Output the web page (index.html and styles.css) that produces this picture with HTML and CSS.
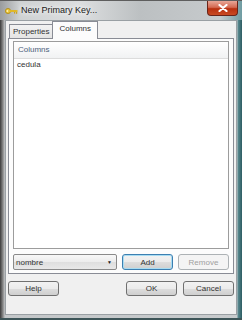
FILE: index.html
```html
<!DOCTYPE html>
<html lang="en">
<head>
    <meta charset="UTF-8">
    <title>New Primary Key...</title>
    <link rel="stylesheet" href="styles.css">
</head>
<body>
    <div class="window">
        <div class="titlebar">
            <svg class="key" width="13" height="8" viewBox="0 0 13 8">
                <circle cx="3" cy="4" r="2.6" fill="#e8c23a" stroke="#b08a10" stroke-width="0.8"/>
                <circle cx="2.4" cy="4" r="0.9" fill="#fff3b0"/>
                <rect x="5" y="3" width="7.5" height="2" fill="#e0b828"/>
                <rect x="9" y="5" width="1.2" height="1.6" fill="#c9a020"/>
                <rect x="11" y="5" width="1.2" height="1.8" fill="#c9a020"/>
            </svg>
            <span class="title">New Primary Key...</span>
            <div class="close">
                <svg width="10" height="8" viewBox="0 0 10 8">
                    <path d="M1.5 1 L8.5 7 M8.5 1 L1.5 7" stroke="#fff" stroke-width="2.2" stroke-linecap="round"/>
                </svg>
            </div>
        </div>

        <div class="client">
            <div class="tabs">
                <div class="tab">Properties</div>
                <div class="tab active">Columns</div>
            </div>
            <div class="panel">
                <div class="list">
                    <div class="list-head">Columns</div>
                    <div class="list-row">cedula</div>
                </div>
                <div class="controls">
                    <div class="combo">
                        <span>nombre</span>
                        <span class="arrow">&#9660;</span>
                    </div>
                    <button class="btn focus">Add</button>
                    <button class="btn disabled">Remove</button>
                </div>
            </div>
            <div class="footer">
                <button class="btn">Help</button>
                <div class="spacer"></div>
                <button class="btn">OK</button>
                <button class="btn">Cancel</button>
            </div>
        </div>
        <div class="grip"></div>
    </div>
</body>
</html>
```

FILE: styles.css
```css
body {
    margin: 0;
    font-family: "Liberation Sans", Arial, sans-serif;
    font-size: 8px;
    color: #222;
}
.window {
    width: 242px;
    height: 320px;
    display: flex;
    flex-direction: column;
    background: linear-gradient(90deg, #3a3a3a 0px, #8a8a8a 3px, #c4c7c9 5px, #c8cbcd 237px, #5a8a90 238px, #2c5c62 242px);
    border-bottom: 2px solid #3d5558;
    box-sizing: border-box;
    position: relative;
    overflow: hidden;
}
.titlebar {
    height: 20px;
    display: flex;
    align-items: flex-start;
    background: linear-gradient(90deg, #9a9c9e 0px, #cfd2d3 20px, #dcdedf 80px, #bcc0c2 140px, #c6cacc 220px, #6f9ca2 242px);
    border-top: 1px solid #5e5e5e;
    box-sizing: border-box;
}
.key {
    margin: 6px 0 0 5px;
}
.title {
    margin: 4px 0 0 3px;
    font-size: 9px;
    color: #1a1a1a;
    text-shadow: 0 0 4px #f4f4f4, 0 0 6px #ffffff;
}
.close {
    margin-left: auto;
    margin-right: 4px;
    width: 31px;
    height: 15px;
    box-sizing: border-box;
    border: 1px solid #6a2418;
    border-top: none;
    border-radius: 0 0 4px 4px;
    background: linear-gradient(180deg, #e8a797 0%, #d46a52 45%, #b8300f 55%, #c94a22 100%);
    display: flex;
    align-items: center;
    justify-content: center;
}
.client {
    flex: 1;
    margin: 0 5px 3px 5px;
    background: #f0f0f0;
    border: 1px solid #9aa0a4;
    display: flex;
    flex-direction: column;
    box-sizing: border-box;
}
.tabs {
    display: flex;
    align-items: flex-end;
    margin: 1px 0 -1px 3px;
    height: 17px;
}
.tab {
    height: 14px;
    padding: 0 3px;
    line-height: 14px;
    border: 1px solid #898c95;
    border-bottom: none;
    background: linear-gradient(180deg, #f2f2f2, #e3e3e3);
    color: #333;
}
.tab.active {
    height: 17px;
    line-height: 14px;
    padding: 0 6px;
    margin-left: -1px;
    background: #fcfcfc;
    position: relative;
}
.panel {
    margin: 0 2px 0 2px;
    height: 236px;
    border: 1px solid #898c95;
    background: #fcfcfc;
    padding: 2px 4px 3px 4px;
    display: flex;
    flex-direction: column;
    box-sizing: border-box;
}
.list {
    flex: 1;
    border: 1px solid #9c9c9c;
    background: #fff;
}
.list-head {
    height: 16px;
    line-height: 16px;
    padding-left: 4px;
    background: linear-gradient(180deg, #ffffff, #f1f2f3);
    border-bottom: 1px solid #dcdcdc;
    color: #4c607a;
}
.list-row {
    padding: 0 0 0 3px;
    line-height: 12px;
    color: #333;
}
.controls {
    display: flex;
    gap: 5px;
    margin-top: 5px;
    height: 16px;
}
.combo {
    width: 104px;
    box-sizing: border-box;
    border: 1px solid #8a8a8a;
    border-radius: 2px;
    background: linear-gradient(180deg, #f8f8f8 0%, #ececec 50%, #dedede 51%, #e8e8e8 100%);
    display: flex;
    align-items: center;
    justify-content: space-between;
    padding: 0 4px 0 2px;
    color: #333;
}
.arrow {
    font-size: 5px;
    color: #222;
}
.btn {
    width: 51px;
    height: 15px;
    padding: 0;
    font-family: "Liberation Sans", Arial, sans-serif;
    font-size: 8px;
    color: #333;
    border: 1px solid #707070;
    border-radius: 3px;
    background: linear-gradient(180deg, #f2f2f2 0%, #ebebeb 50%, #dddddd 51%, #cfcfcf 100%);
}
.controls .btn {
    height: 16px;
}
.btn.focus {
    border-color: #3c7fb1;
    box-shadow: inset 0 0 0 1px #a8dcf2;
}
.btn.disabled {
    color: #a0a0a0;
    border-color: #adb2b5;
    background: #f4f4f4;
}
.footer {
    display: flex;
    align-items: center;
    gap: 6px;
    margin: 7px 2px 0 2px;
}
.spacer {
    flex: 1;
}
.grip {
    position: absolute;
    right: 6px;
    bottom: 5px;
    width: 5px;
    height: 5px;
    background: radial-gradient(circle, #a0a0a0 35%, transparent 40%) 0 0 / 2px 2px;
}
```
